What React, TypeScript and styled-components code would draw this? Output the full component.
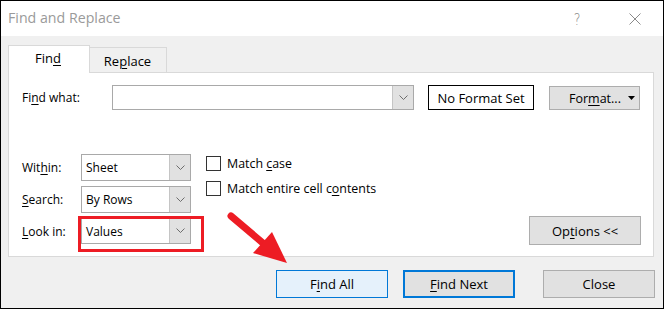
import React from "react";
import styled, { createGlobalStyle } from "styled-components";

const Global = createGlobalStyle`
  html, body { margin: 0; padding: 0; background: #fff; }
  body { font-family: "Open Sans", "Noto Sans", sans-serif; font-size: 12px; color: #000; }
  * { box-sizing: border-box; }
  u { text-decoration-thickness: 1px; text-underline-offset: 2px; }
`;

const Frame = styled.div`
  position: relative;
  width: 664px;
  height: 309px;
  border: 1px solid #000;
  background: #f0f0f0;
  display: flex;
  flex-direction: column;
`;

const TitleBar = styled.div`
  height: 35px;
  background: #fff;
  display: flex;
  align-items: center;
  padding-left: 7px;
  flex-shrink: 0;
`;

const Title = styled.div`
  font-size: 14.2px;
  color: #9a9a9a;
  flex: 1;
  margin-top: -2px;
`;

const Help = styled.div`
  font-size: 16px;
  color: #8a8a8a;
  font-family: "DejaVu Sans", sans-serif;
  font-weight: 300;
  margin-right: 48px;
  margin-top: 1px;
  transform: scaleX(0.8);
`;

const CloseX = styled.svg`
  width: 12px;
  height: 12px;
  margin-right: 22px;
`;

const Body = styled.div`
  flex: 1;
  display: flex;
  flex-direction: column;
  padding: 9px 8px 10px 7px;
`;

const Tabs = styled.div`
  display: flex;
  align-items: flex-end;
  height: 28px;
  margin-bottom: -1px;
  position: relative;
  z-index: 1;
`;

const Tab = styled.div<{ $active?: boolean }>`
  display: flex;
  align-items: center;
  justify-content: center;
  height: ${(p) => (p.$active ? 28 : 26)}px;
  width: ${(p) => (p.$active ? 82 : 77)}px;
  background: ${(p) => (p.$active ? "#fff" : "#f0f0f0")};
  border: 1px solid #d9d9d9;
  border-bottom: ${(p) => (p.$active ? "none" : "1px solid #d9d9d9")};
  border-left: ${(p) => (p.$active ? "1px solid #d9d9d9" : "none")};
  padding-top: ${(p) => (p.$active ? 0 : 1)}px;
  padding-bottom: ${(p) => (p.$active ? 3 : 0)}px;
  padding-right: ${(p) => (p.$active ? 2 : 1)}px;
  font-size: 13px;
`;

const Panel = styled.div`
  height: 185px;
  margin-right: 1px;
  background: #fff;
  border: 1px solid #d9d9d9;
  padding: 12px 12px 11px 13px;
  display: flex;
  flex-direction: column;
`;

const TopRow = styled.div`
  display: flex;
  align-items: flex-start;
`;

const Label = styled.div<{ $w?: number }>`
  width: ${(p) => p.$w ?? 59}px;
  display: flex;
  align-items: center;
  height: 25px;
  flex-shrink: 0;
`;

const Combo = styled.div<{ $w: number; $h: number }>`
  width: ${(p) => p.$w}px;
  height: ${(p) => p.$h}px;
  border: 1px solid #a9a9a9;
  background: #fff;
  display: flex;
  align-items: stretch;
  position: relative;
`;

const ComboText = styled.div`
  flex: 1;
  display: flex;
  align-items: center;
  padding-left: 4px;
`;

const DropBtn = styled.div`
  width: 21px;
  background: #e1e1e1;
  border-left: 1px solid #c5c5c5;
  display: flex;
  align-items: center;
  justify-content: center;
`;

const FormatBox = styled.div`
  width: 106px;
  height: 25px;
  margin-left: 14px;
  border: 1px solid #000;
  display: flex;
  align-items: center;
  justify-content: center;
  font-size: 13px;
`;

const GrayButton = styled.div<{ $w: number; $h: number }>`
  width: ${(p) => p.$w}px;
  height: ${(p) => p.$h}px;
  background: #e1e1e1;
  border: 1px solid #adadad;
  display: flex;
  align-items: center;
  justify-content: center;
  flex-shrink: 0;
  font-size: 13px;
`;

const FormatButton = styled(GrayButton)`
  margin-left: 15px;
  margin-top: 1px;
  justify-content: flex-start;
  padding-left: 19px;
  padding-right: 4px;
  font-size: 12.5px;
`;

const Caret = styled.svg`
  width: 7px;
  height: 4px;
  margin-left: auto;
`;

const LowerRow = styled.div`
  display: flex;
  margin-top: 44px;
  flex: 1;
`;

const FieldGrid = styled.div`
  display: grid;
  grid-template-columns: 59px 110px;
  grid-template-rows: 27px 27px 26px;
  row-gap: 5px;
  align-items: center;
`;

const Cell = styled.div`
  position: relative;
  height: 100%;
`;

const Highlight = styled.div`
  position: absolute;
  left: -3px;
  top: -2px;
  width: 126px;
  height: 36px;
  border: 3px solid #ed1c24;
  pointer-events: none;
`;

const Checks = styled.div`
  display: flex;
  flex-direction: column;
  gap: 10px;
  margin-left: 15px;
  padding-top: 2px;
`;

const CheckRow = styled.label`
  display: flex;
  align-items: center;
  gap: 6px;
  height: 15px;
  font-size: 12.4px;
`;

const Box = styled.span`
  width: 15px;
  height: 15px;
  border: 1px solid #333;
  background: #fff;
  display: inline-block;
`;

const OptionsButton = styled(GrayButton)`
  margin-left: auto;
  align-self: flex-end;
`;

const ButtonRow = styled.div`
  display: flex;
  justify-content: flex-end;
  margin-top: 13px;
`;

const ActionButton = styled.div<{ $variant: "hover" | "default" | "plain"; $gap: number }>`
  width: 112px;
  height: 28px;
  margin-left: ${(p) => p.$gap}px;
  display: flex;
  align-items: center;
  justify-content: center;
  font-size: 13px;
  background: ${(p) => (p.$variant === "hover" ? "#e5f1fb" : "#e1e1e1")};
  border: ${(p) =>
    p.$variant === "hover"
      ? "1px solid #0078d7"
      : p.$variant === "default"
      ? "2px solid #0078d7"
      : "1px solid #adadad"};
`;

const Arrow = styled.svg`
  position: absolute;
  left: 219px;
  top: 199px;
  width: 80px;
  height: 75px;
  pointer-events: none;
  z-index: 5;
`;

const Chevron = () => (
  <svg width="9" height="6" viewBox="0 0 9 6">
    <polyline points="0.5,0.5 4.5,4.5 8.5,0.5" fill="none" stroke="#606060" strokeWidth="0.9" />
  </svg>
);

const Select = ({ value, children }: { value: string; children?: React.ReactNode }) => (
  <Cell>
    <Combo $w={110} $h={27} style={{ height: "100%" }}>
      <ComboText>{value}</ComboText>
      <DropBtn>
        <Chevron />
      </DropBtn>
    </Combo>
    {children}
  </Cell>
);

export default function App() {
  return (
    <>
      <Global />
      <Frame>
        <TitleBar>
          <Title>Find and Replace</Title>
          <Help>?</Help>
          <CloseX viewBox="0 0 12 12">
            <line x1="0.5" y1="0.5" x2="11.5" y2="11.5" stroke="#8a8a8a" strokeWidth="1" />
            <line x1="11.5" y1="0.5" x2="0.5" y2="11.5" stroke="#8a8a8a" strokeWidth="1" />
          </CloseX>
        </TitleBar>
        <Body>
          <Tabs>
            <Tab $active>
              Fin<u>d</u>
            </Tab>
            <Tab>
              Re<u>p</u>lace
            </Tab>
          </Tabs>
          <Panel>
            <TopRow>
              <Label $w={90}>
                Fi<u>n</u>d what:
              </Label>
              <Combo $w={302} $h={25}>
                <ComboText />
                <DropBtn>
                  <Chevron />
                </DropBtn>
              </Combo>
              <FormatBox>No Format Set</FormatBox>
              <FormatButton $w={91} $h={24}>
                <span>
                  For<u>m</u>at...
                </span>
                <Caret viewBox="0 0 7 4">
                  <polygon points="0,0 7,0 3.5,4" fill="#000" />
                </Caret>
              </FormatButton>
            </TopRow>
            <LowerRow>
              <FieldGrid>
                <Label>
                  Wit<u>h</u>in:
                </Label>
                <Select value="Sheet" />
                <Label>
                  <u>S</u>earch:
                </Label>
                <Select value="By Rows" />
                <Label>
                  <u>L</u>ook in:
                </Label>
                <Select value="Values">
                  <Highlight />
                </Select>
              </FieldGrid>
              <Checks>
                <CheckRow>
                  <Box />
                  <span>
                    Match <u>c</u>ase
                  </span>
                </CheckRow>
                <CheckRow>
                  <Box />
                  <span>
                    Match entire cell c<u>o</u>ntents
                  </span>
                </CheckRow>
              </Checks>
              <OptionsButton $w={112} $h={29}>
                <span>
                  Op<u>t</u>ions &lt;&lt;
                </span>
              </OptionsButton>
            </LowerRow>
          </Panel>
          <ButtonRow>
            <ActionButton $variant="hover" $gap={0}>
              <span>
                F<u>i</u>nd All
              </span>
            </ActionButton>
            <ActionButton $variant="default" $gap={15}>
              <span>
                <u>F</u>ind Next
              </span>
            </ActionButton>
            <ActionButton $variant="plain" $gap={28}>
              Close
            </ActionButton>
          </ButtonRow>
        </Body>
        <Arrow viewBox="0 0 80 75">
          <line x1="11" y1="16" x2="44" y2="44" stroke="#ed1c24" strokeWidth="7" strokeLinecap="round" />
          <polygon points="52,32 33,53 67,63" fill="#ed1c24" />
        </Arrow>
      </Frame>
    </>
  );
}
